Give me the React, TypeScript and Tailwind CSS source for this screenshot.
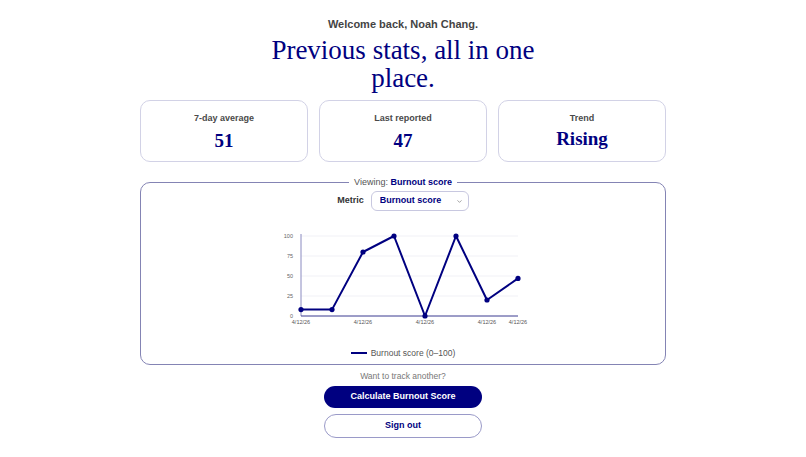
import { ChevronDown } from "lucide-react";

const NAVY = "#000080";

const points = [8, 8, 80, 100, 0, 100, 20, 47];
const labelIdx = [0, 2, 4, 6, 7];

function StatCard({ label, value, word }: { label: string; value: string; word?: boolean }) {
  return (
    <div className="flex h-[62px] w-[168px] flex-col items-center rounded-[10px] border border-[#d2d2e6] bg-white pt-[12px]">
      <p className="text-[9px] font-bold leading-[11px] text-[#4a4a4a]">{label}</p>
      <p
        className={
          word
            ? "mt-[4px] text-[19px] font-bold leading-[22px] text-[#000080]"
            : "mt-[6px] text-[19px] font-bold leading-[22px] text-[#000080]"
        }
        style={{ fontFamily: '"Liberation Serif", "DejaVu Serif", serif' }}
      >
        {value}
      </p>
    </div>
  );
}

function Chart() {
  // plot area: x 28..245, y 8..88
  const x0 = 28;
  const step = 31;
  const yOf = (v: number) => 88 - v * 0.8;
  const path = points.map((v, i) => `${i === 0 ? "M" : "L"}${x0 + i * step},${yOf(v)}`).join(" ");
  return (
    <svg width="260" height="100" viewBox="0 0 260 100" className="block">
      {[0, 25, 50, 75, 100].map((t) => (
        <g key={t}>
          {t > 0 && <line x1={x0} x2={245} y1={yOf(t)} y2={yOf(t)} stroke="#eeeef4" strokeWidth="0.8" />}
          <text
            x={x0 - 8}
            y={yOf(t) + 2}
            textAnchor="end"
            fontSize="5.5"
            fill="#666"
            fontFamily="Liberation Sans, Arial, sans-serif"
          >
            {t}
          </text>
        </g>
      ))}
      <line x1={x0} x2={x0} y1={6} y2={88} stroke="#8a8ac0" strokeWidth="1" />
      <line x1={x0} x2={245} y1={88} y2={88} stroke="#3a3a90" strokeWidth="1" />
      {labelIdx.map((i) => (
        <text
          key={i}
          x={x0 + i * step}
          y={96}
          textAnchor="middle"
          fontSize="5.5"
          fill="#555"
          fontFamily="Liberation Sans, Arial, sans-serif"
        >
          4/12/26
        </text>
      ))}
      <path d={path} fill="none" stroke={NAVY} strokeWidth="2" strokeLinejoin="round" />
      {points.map((v, i) => (
        <circle key={i} cx={x0 + i * step} cy={yOf(v)} r="2.6" fill={NAVY} />
      ))}
    </svg>
  );
}

export default function App() {
  return (
    <div
      className="flex min-h-screen flex-col items-center bg-white pt-[18px]"
      style={{ fontFamily: '"Liberation Sans", Arial, sans-serif' }}
    >
      <p className="text-[11px] font-bold leading-[13px] text-[#444]">Welcome back, Noah Chang.</p>
      <h1
        className="mt-[5px] max-w-[300px] text-center text-[27px] leading-[28px] text-[#000080]"
        style={{ fontFamily: '"Liberation Serif", "DejaVu Serif", serif' }}
      >
        Previous stats, all in one place.
      </h1>

      <div className="mt-[8px] flex gap-[11px]">
        <StatCard label="7-day average" value="51" />
        <StatCard label="Last reported" value="47" />
        <StatCard label="Trend" value="Rising" word />
      </div>

      <fieldset className="mt-[15px] w-[526px] rounded-[10px] border border-[#8484b4] px-0 pb-[6px] pt-0">
        <legend className="mx-auto px-[5px] text-[9px] leading-[11px] text-[#555]">
          Viewing: <span className="font-bold text-[#000080]">Burnout score</span>
        </legend>
        <div className="mt-[3px] flex items-center justify-center gap-[7px]">
          <span className="text-[9px] font-bold text-[#333]">Metric</span>
          <div className="relative flex">
            <select
              defaultValue="burnout"
              className="h-[20px] w-[98px] appearance-none rounded-[6px] border border-[#c8c8e0] bg-white pl-[8px] text-[9px] font-bold text-[#000080] outline-none"
            >
              <option value="burnout">Burnout score</option>
            </select>
            <span className="pointer-events-none absolute inset-y-0 right-[6px] flex items-center">
              <ChevronDown className="h-[7px] w-[7px] text-[#666]" strokeWidth={2} />
            </span>
          </div>
        </div>
        <div className="mt-[17px] flex justify-center">
          <Chart />
        </div>
        <div className="mt-[20px] flex items-center justify-center gap-[4px]">
          <span className="h-[2px] w-[16px] bg-[#000080]" />
          <span className="text-[8.5px] leading-[10px] text-[#555]">Burnout score (0–100)</span>
        </div>
      </fieldset>

      <p className="mt-[6px] text-[8.5px] leading-[10px] text-[#777]">Want to track another?</p>
      <button className="mt-[5px] h-[22px] w-[158px] rounded-full bg-[#000080] text-[9px] font-bold text-white">
        Calculate Burnout Score
      </button>
      <button className="mt-[6px] h-[24px] w-[158px] rounded-full border border-[#9a9ac8] bg-white text-[9px] font-bold text-[#000080]">
        Sign out
      </button>
    </div>
  );
}
